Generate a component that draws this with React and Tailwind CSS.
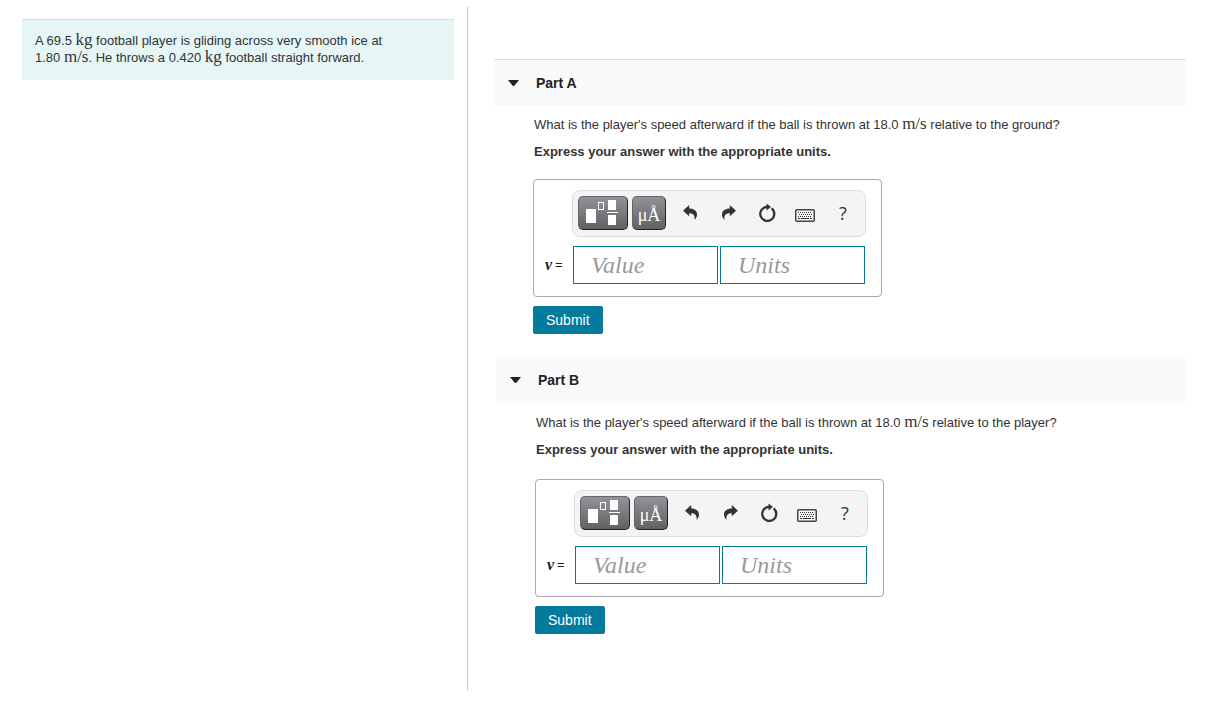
import React, { useState } from "react";

function Unit({ children }) {
  return (
    <span className="font-['Liberation_Serif',serif] text-[17px] leading-3">
      {children}
    </span>
  );
}

function TemplatesIcon() {
  return (
    <svg width="34" height="28" viewBox="0 0 34 28" aria-hidden="true">
      <rect x="0" y="10" width="10" height="14" fill="#fff" />
      <rect x="12.5" y="3.5" width="5" height="7" fill="none" stroke="#fff" />
      <rect x="22" y="1" width="8" height="10" fill="#fff" />
      <rect x="21" y="13" width="11" height="1" fill="#fff" />
      <rect x="22" y="16" width="8" height="10" fill="#fff" />
    </svg>
  );
}

function ArrowIcon({ flip = false }) {
  return (
    <svg width="16" height="16" viewBox="0 0 16 16" fill="#333" aria-hidden="true">
      <path
        transform={flip ? "matrix(-1 0 0 1 15 0)" : undefined}
        d="M0 5.800 6.200 0V3.400C11 3.400 14 5.800 14 9.500C14 11.500 13.200 13.300 11.500 15C12.300 11 10.500 8.300 6.200 8.300V11.200Z"
      />
    </svg>
  );
}

function ResetIcon() {
  return (
    <svg width="18" height="20" viewBox="0 0 18 20" aria-hidden="true">
      <path
        d="M13.600 5.400A7 7 0 1 1 9 3.900"
        fill="none"
        stroke="#333"
        strokeWidth="2.300"
      />
      <path d="M8.500 0.500 13 4 8.500 7.500Z" fill="#333" />
    </svg>
  );
}

function KeyboardIcon() {
  return (
    <svg width="20" height="13" viewBox="0 0 20 13" aria-hidden="true">
      <rect x="0.750" y="0.750" width="18.500" height="11.500" rx="1" fill="#f9f9f9" stroke="#444" strokeWidth="1.500" />
      <path
        d="M3 3.500H17M4 5.500H17M3 7.500H17"
        stroke="#333"
        strokeWidth="1"
        strokeDasharray="1 1"
      />
      <path d="M3 9.500H5M6 9.500H14M15 9.500H17" stroke="#333" strokeWidth="1" />
    </svg>
  );
}

const DARK_BUTTON =
  "flex h-[34px] items-center justify-center rounded-[5px] border border-t-[#666] border-l-[#666] border-r-[#222] border-b-[#222] bg-linear-to-b from-[#92929a] to-[#626264] text-white";
const TOOL_BUTTON = "flex h-[34px] w-[38px] items-center justify-center text-[#333]";

function Toolbar() {
  return (
    <div
      role="toolbar"
      aria-label="Answer tools"
      className="flex h-[47px] items-center rounded-lg border border-[#ddd] bg-[#f4f4f4] pb-px pl-[5px]"
    >
      <button type="button" aria-label="Templates" className={DARK_BUTTON + " mr-1 w-[50px]"}>
        <TemplatesIcon />
      </button>
      <button
        type="button"
        aria-label="Symbols"
        className={DARK_BUTTON + " mr-1.5 w-[34px] pt-1 font-['Liberation_Serif',serif] text-lg leading-6"}
      >
        μÅ
      </button>
      <button type="button" aria-label="Undo" className={TOOL_BUTTON}>
        <ArrowIcon />
      </button>
      <button type="button" aria-label="Redo" className={TOOL_BUTTON}>
        <ArrowIcon flip />
      </button>
      <button type="button" aria-label="Reset" className={TOOL_BUTTON}>
        <ResetIcon />
      </button>
      <button type="button" aria-label="Keyboard shortcuts" className={TOOL_BUTTON + " pt-1"}>
        <KeyboardIcon />
      </button>
      <button
        type="button"
        aria-label="Help"
        className={TOOL_BUTTON + " font-['Open_Sans',sans-serif] text-lg leading-6"}
      >
        ?
      </button>
    </div>
  );
}

const FIELD =
  "h-[38px] w-[145px] border border-[#047a9c] bg-white pl-[17px] pr-2 font-['Liberation_Serif',serif] text-2xl text-[#333] placeholder:italic placeholder:text-[#999]";

function AnswerBox({ id }) {
  return (
    <div className="flex w-fit max-w-full items-end rounded border border-[#aaa] pt-[10px] pr-[15px] pb-3 pl-[11px]">
      <label
        htmlFor={id + "-value"}
        className="flex h-[38px] w-[27px] items-center gap-[3px] text-[13px] text-[#222]"
      >
        <i className="font-['Liberation_Serif',serif] text-base leading-none font-bold">v</i>=
      </label>
      <div className="flex flex-col gap-[9px]">
        <Toolbar />
        <div className="flex gap-0.5 px-px">
          <input id={id + "-value"} type="text" placeholder="Value" className={FIELD} />
          <input type="text" aria-label="Units" placeholder="Units" className={FIELD} />
        </div>
      </div>
    </div>
  );
}

function Part({ id, title, lined = false, target, inset, bodyPad, boxGap }) {
  const [open, setOpen] = useState(true);
  return (
    <section className={inset}>
      <h2
        className={
          "bg-[#f9f9f9] text-sm font-bold text-[#222] " + (lined ? "border-t border-[#ddd]" : "")
        }
      >
        <button
          type="button"
          aria-expanded={open}
          onClick={() => setOpen(!open)}
          className="flex h-[46px] w-full items-center gap-[17px] pl-[14px] text-left"
        >
          <svg width="11" height="6" viewBox="0 0 11 6" fill="#222" aria-hidden="true">
            <path d="M0 0H11L6.500 5.500Q5.500 6.500 4.500 5.500Z" />
          </svg>
          {title}
        </button>
      </h2>
      {open && (
        <form className={"pl-10 " + bodyPad} onSubmit={(e) => e.preventDefault()}>
          <p className="text-[13px] leading-[18px]">
            What is the player's speed afterward if the ball is thrown at 18.0 <Unit>m/s</Unit>{" "}
            relative to the {target}?
          </p>
          <p className="mt-[9px] text-[13px] leading-[18px] font-bold">
            Express your answer with the appropriate units.
          </p>
          <div className={"-ml-px " + boxGap}>
            <AnswerBox id={id} />
            <button
              type="submit"
              className="mt-[9px] h-7 rounded-xs bg-[#047a9c] px-[13px] text-sm text-white"
            >
              Submit
            </button>
          </div>
        </form>
      )}
    </section>
  );
}

export default function App() {
  return (
    <div className="flex min-h-screen bg-white pt-[7px] pb-[33px] font-['Liberation_Sans',Arial,sans-serif] text-[#333]">
      <aside className="w-[468px] shrink-0 border-r border-[#bcc6d6] pt-3 pr-[13px] pl-[22px]">
        <p className="border-t border-[#d9dfe0] bg-[#e6f6f7] px-[13px] pt-3 pb-3.5 text-[13px] leading-[17px]">
          A 69.5 <Unit>kg</Unit> football player is gliding across very smooth ice at
          <br />
          1.80 <Unit>m/s</Unit>. He throws a 0.420 <Unit>kg</Unit> football straight forward.
        </p>
      </aside>
      <main className="flex min-w-0 flex-1 flex-col gap-[23px] pt-[52px] pr-[38px] pl-[26px]">
        <Part
          id="part-a"
          title="Part A"
          lined
          target="ground"
          inset=""
          bodyPad="pt-2.5"
          boxGap="mt-[18px]"
        />
        <Part
          id="part-b"
          title="Part B"
          target="player"
          inset="ml-0.5"
          bodyPad="pt-[11px]"
          boxGap="mt-5"
        />
      </main>
    </div>
  );
}
